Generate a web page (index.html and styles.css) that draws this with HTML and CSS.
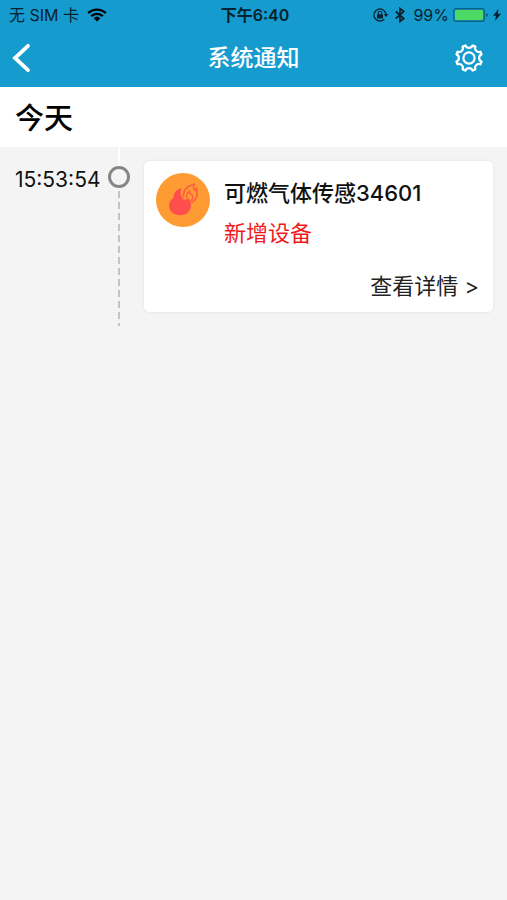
FILE: index.html
```html
<!DOCTYPE html>
<html lang="zh-CN">
<head>
<meta charset="utf-8">
<meta name="viewport" content="width=device-width, initial-scale=1">
<title>系统通知</title>
<link rel="stylesheet" href="styles.css">
</head>
<body>
<header class="top">
  <div class="status">
    <div class="status-side">
      <span>无 SIM 卡</span>
      <svg class="wifi" width="20" height="14" viewBox="0 0 20 14" aria-hidden="true">
        <path d="M1.2 5.2a12.6 12.6 0 0 1 17.6 0M4.2 8.2a8.3 8.3 0 0 1 11.6 0" fill="none" stroke="currentColor" stroke-width="2.4"/>
        <path d="M6.600 10.200a5 5 0 0 1 6.800 0L10 13.600z" fill="currentColor"/>
      </svg>
    </div>
    <span class="clock">下午6:40</span>
    <div class="status-side status-right">
      <svg width="16" height="14" viewBox="0 0 16 14" aria-hidden="true">
        <path d="M12.900 6.500A6 6 0 1 0 11.200 11.200" fill="none" stroke="currentColor" stroke-width="1.300"/>
        <path d="M10.700 6h4.600L13 9z" fill="currentColor"/>
        <rect x="4" y="6.200" width="6" height="4.300" rx=".5" fill="currentColor"/>
        <path d="M5.300 6.500V5a1.700 1.700 0 0 1 3.400 0v1.500" fill="none" stroke="currentColor" stroke-width="1.100"/>
      </svg>
      <svg class="bluetooth" width="10" height="16" viewBox="0 0 10 16" aria-hidden="true">
        <path d="M.8 4.500l8 7L5 14.500V1.500l3.800 3-8 7" fill="none" stroke="currentColor" stroke-width="1.700"/>
      </svg>
      <span class="percent">99%</span>
      <svg class="battery" width="36" height="14" viewBox="0 0 36 14" aria-hidden="true">
        <rect x=".8" y=".8" width="30.400" height="12.400" rx="2" fill="none" stroke="#0d6288" stroke-width="1.400"/>
        <rect x="2" y="2" width="28" height="10" rx="1" fill="#4cd964"/>
        <path d="M33 4.800q2 .8 2 2.200t-2 2.200z" fill="#0d6288"/>
      </svg>
      <svg width="8" height="12" viewBox="0 0 8 12" aria-hidden="true">
        <path d="M5.500 0L0 6.800h3L2 12l6-7.200H4.700z" fill="currentColor"/>
      </svg>
    </div>
  </div>
  <nav class="nav">
    <button class="icon-button" type="button" aria-label="返回">
      <svg width="20" height="30" viewBox="0 0 20 30" aria-hidden="true">
        <path d="M16 2.800L3 15l13 12.200" fill="none" stroke="currentColor" stroke-width="3.800" stroke-linecap="round"/>
      </svg>
    </button>
    <h1 class="title">系统通知</h1>
    <button class="icon-button settings" type="button" aria-label="设置">
      <svg width="30" height="30" viewBox="-15 -15 30 30" fill="none" stroke="currentColor" stroke-width="2.200" stroke-linejoin="round" aria-hidden="true">
        <path d="M12.600 -3.600C9.300 -2.400 9.300 2.400 12.600 3.600L11.460 6.360C8.270 4.880 4.880 8.270 6.360 11.460L3.600 12.600C2.400 9.300 -2.400 9.300 -3.600 12.600L-6.360 11.460C-4.880 8.270 -8.270 4.880 -11.460 6.360L-12.600 3.600C-9.300 2.400 -9.300 -2.400 -12.600 -3.600L-11.460 -6.360C-8.270 -4.880 -4.880 -8.270 -6.360 -11.460L-3.600 -12.600C-2.400 -9.300 2.400 -9.300 3.600 -12.600L6.360 -11.460C4.880 -8.270 8.270 -4.880 11.460 -6.360Z"/>
        <circle r="5.600"/>
      </svg>
    </button>
  </nav>
</header>
<main>
  <h2 class="day">今天</h2>
  <article class="entry">
    <time class="time">15:53:54</time>
    <div class="rail">
      <span class="lead"></span>
      <span class="dot"></span>
      <span class="dashes"></span>
    </div>
    <div class="card">
      <div class="device">
        <svg class="avatar" width="54" height="54" viewBox="0 0 54 54" aria-hidden="true">
          <circle cx="27" cy="27" r="27" fill="#ff9b33"/>
          <path d="M25.500 15C19.500 17 17.500 20.500 17.500 25C14.500 27 13 29.500 13 32.500C13 38.500 18 42.300 24 42.300C30.500 42.300 35 38 35 32.500C35 29.500 34 27 32 25C31 26.500 29.500 27.200 28 26.700C26 25 24.500 23 24.600 20C24.600 18 25 16.500 25.500 15Z" fill="#ff4f4d"/>
          <path d="M27.500 24.500C27 19.500 28.500 16 32.500 13.500C34.500 12.500 37 12 38.500 10.500C37.300 13 37.300 15 38.300 17L40.800 15.500C40 18.500 42 20.500 40.800 23.500C39.800 26.500 37.500 29 34.500 29.500" fill="none" stroke="#ff5d43" stroke-width="1.600"/>
          <path d="M31 25.500C30 22.500 31 20 33.500 18C33.300 20 34.200 21.200 36 22C37.500 23 37 25.500 35 28" fill="none" stroke="#ff5d43" stroke-width="1.400"/>
        </svg>
        <div>
          <h3 class="name">可燃气体传感34601</h3>
          <p class="event">新增设备</p>
        </div>
      </div>
      <a class="more" href="#detail">查看详情 &gt;</a>
    </div>
  </article>
</main>
</body>
</html>
```
FILE: styles.css
```css
* {
  box-sizing: border-box;
}

body {
  margin: 0;
  min-height: 100vh;
  background: #f4f4f4;
  color: #111;
  font-family: Inter, "Noto Sans CJK SC", sans-serif;
}

h1,
h2,
h3,
p {
  margin: 0;
}

.top {
  background: #169bce;
}

.status {
  display: grid;
  grid-template-columns: 1fr auto 1fr;
  align-items: center;
  height: 30px;
  padding: 0 6px 0 9px;
  color: #06222e;
  font-size: 16px;
  line-height: 20px;
}

.status-side {
  display: flex;
  align-items: center;
  gap: 8px;
}

.status-right {
  justify-content: flex-end;
  gap: 6px;
}

.percent {
  margin: 0 -2px 0 2px;
}

.battery {
  margin-right: -2px;
}

.wifi {
  color: #000;
}

.clock {
  font-weight: 600;
}

.nav {
  display: grid;
  grid-template-columns: 48px 1fr 48px;
  align-items: center;
  height: 57px;
  padding: 0 12px 2px;
  color: #fff;
}

.title {
  font-size: 23px;
  font-weight: 500;
  line-height: 32px;
  text-align: center;
}

.icon-button {
  display: flex;
  padding: 0;
  border: 0;
  background: none;
  color: inherit;
  cursor: pointer;
}

.settings {
  justify-self: end;
  margin-right: 11px;
}

.day {
  padding: 12px 15px 8px;
  background: #fff;
  color: #000;
  font-size: 29px;
  font-weight: 500;
  line-height: 40px;
}

.entry {
  display: grid;
  grid-template-columns: 93px 22px 1fr;
  padding: 0 14px 0 15px;
}

.time {
  padding-top: 20px;
  font-size: 21px;
  line-height: 26px;
}

.rail {
  display: flex;
  flex-direction: column;
  align-items: center;
}

.lead {
  width: 2px;
  height: 19px;
  background: #fff;
}

.dot {
  width: 22px;
  height: 22px;
  border: 3px solid #858585;
  border-radius: 50%;
}

.dashes {
  flex: 1;
  width: 2px;
  margin-top: 3px;
  background: repeating-linear-gradient(#c4c4c4 0 7px, transparent 7px 11px);
}

.card {
  display: flex;
  flex-direction: column;
  margin: 14px 0 14px 14px;
  padding: 12px 14px 11px 12px;
  border-radius: 5px;
  background: #fff;
  box-shadow: 0 0 3px #dedede;
}

.device {
  display: flex;
  gap: 14px;
}

.avatar {
  flex: none;
}

.name {
  color: #111;
  font-size: 22px;
  font-weight: 500;
  line-height: 40px;
}

.event {
  color: #f0191d;
  font-size: 22px;
  line-height: 40px;
}

.more {
  align-self: flex-end;
  margin-top: 18px;
  color: #222;
  font-size: 22px;
  line-height: 30px;
  text-decoration: none;
}
```
